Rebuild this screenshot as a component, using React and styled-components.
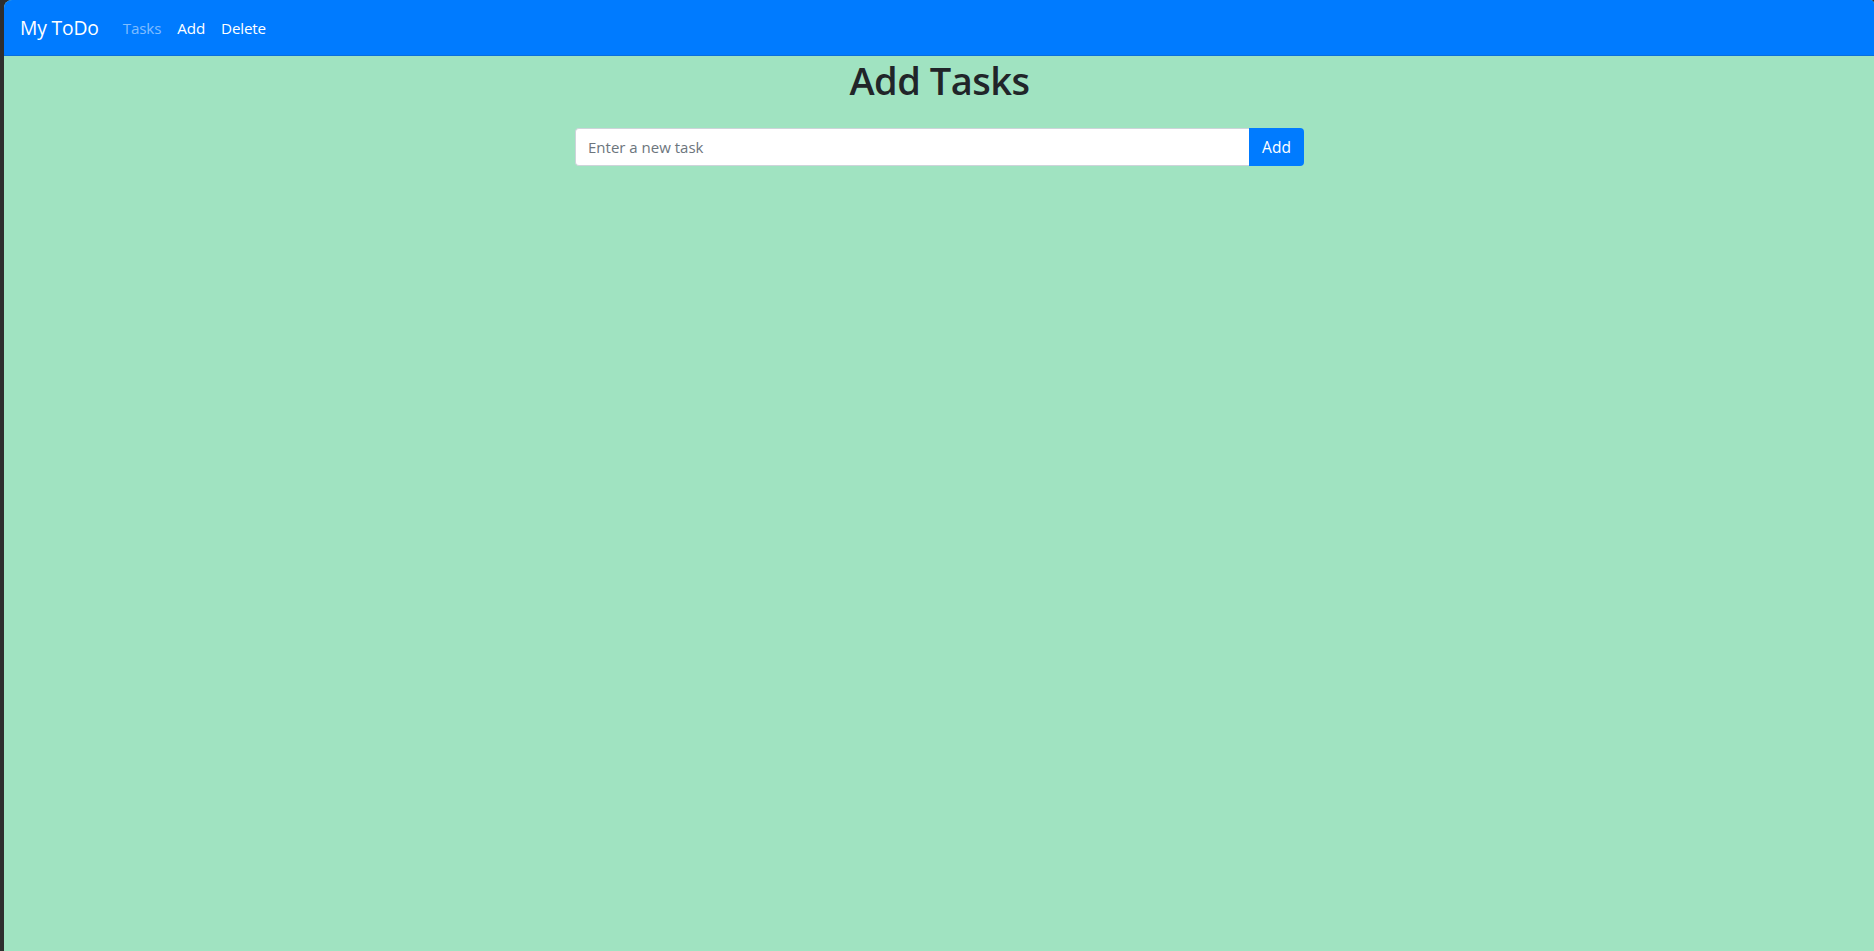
import React from 'react'
import styled, { createGlobalStyle } from 'styled-components'

const GlobalStyle = createGlobalStyle`
  html, body {
    margin: 0;
    padding: 0;
    background: #2e2e2e;
    overflow: hidden;
  }
  body {
    font-family: "Open Sans", "Noto Sans", sans-serif;
    color: #212529;
  }
  * {
    box-sizing: border-box;
  }
`

const Frame = styled.div`
  margin-left: 4px;
  height: 951px;
  background: #a0e3c1;
  border-top-left-radius: 8px;
  border-top-right-radius: 4px;
  overflow: hidden;
`

const Navbar = styled.nav`
  height: 56px;
  background: #007bff;
  display: flex;
  align-items: center;
  padding: 0 16px;
  border-bottom: 1px solid #0a6fdc;
`

const Brand = styled.a`
  font-size: 19.3px;
  color: #fff;
  margin-right: 16px;
  letter-spacing: -0.15px;
  text-decoration: none;
`

const NavLink = styled.a`
  font-size: 15.2px;
  padding: 0 8px;
  color: ${p => (p.muted ? 'rgba(255, 255, 255, 0.5)' : '#fff')};
  letter-spacing: -0.15px;
  text-decoration: none;
`

const Main = styled.main`
  display: flex;
  flex-direction: column;
  align-items: center;
  padding-left: 1px;
`

const Title = styled.h1`
  margin: 0 0 24px;
  font-size: 38px;
  font-weight: 600;
  line-height: 48px;
  letter-spacing: -0.5px;
  color: #212529;
`

const InputGroup = styled.form`
  display: flex;
  width: 729px;
  height: 38px;
`

const TaskInput = styled.input`
  flex: 1;
  height: 100%;
  padding: 0 12px;
  border: 1px solid #ced4da;
  border-right: none;
  border-radius: 4px 0 0 4px;
  font-family: "Open Sans", "Noto Sans", sans-serif;
  font-size: 15px;
  color: #495057;
  background: #fff;
  outline: none;
  &::placeholder {
    color: #6c757d;
  }
`

const AddButton = styled.button`
  width: 55px;
  height: 100%;
  border: none;
  border-radius: 0 4px 4px 0;
  background: #007bff;
  color: #fff;
  font-family: "Open Sans", "Noto Sans", sans-serif;
  font-size: 15.5px;
  cursor: pointer;
`

export default function App() {
  return (
    <>
      <GlobalStyle />
      <Frame>
        <Navbar>
          <Brand>My ToDo</Brand>
          <NavLink muted>Tasks</NavLink>
          <NavLink>Add</NavLink>
          <NavLink>Delete</NavLink>
        </Navbar>
        <Main>
          <Title>Add Tasks</Title>
          <InputGroup onSubmit={e => e.preventDefault()}>
            <TaskInput placeholder="Enter a new task" />
            <AddButton type="submit">Add</AddButton>
          </InputGroup>
        </Main>
      </Frame>
    </>
  )
}
